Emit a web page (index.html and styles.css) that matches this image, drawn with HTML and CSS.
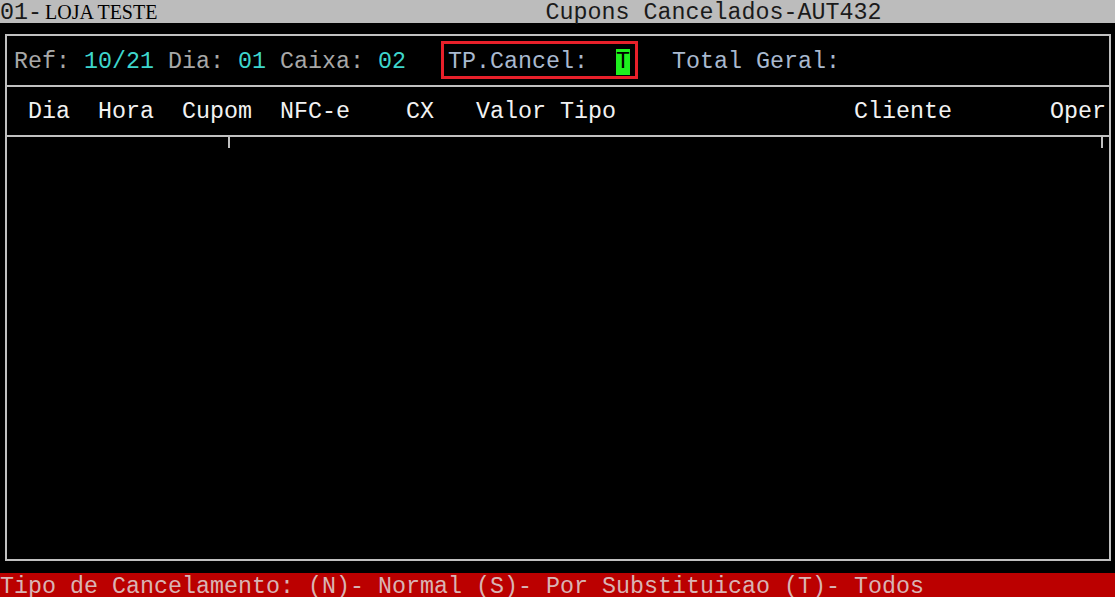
FILE: index.html
```html
<!DOCTYPE html>
<html lang="pt">
<head>
<meta charset="utf-8">
<title>Cupons Cancelados-AUT432</title>
<link rel="stylesheet" href="styles.css">
</head>
<body>
<div class="screen">
  <header class="titlebar"><span class="mono">01-</span><span class="store">LOJA TESTE</span><span class="title mono">Cupons Cancelados-AUT432</span></header>
  <section class="frame">
    <div class="row filters"><span class="lbl">Ref: </span><span class="val">10/21</span><span class="lbl"> Dia: </span><span class="val">01</span><span class="lbl"> Caixa: </span><span class="val">02</span><span class="sp">   </span><span class="hl-box"><span class="lbl2">TP.Cancel:  </span><span class="cursor">T</span></span><span class="sp">   </span><span class="lbl2">Total Geral:</span></div>
    <div class="rule"></div>
    <div class="row head"> Dia  Hora  Cupom  NFC-e    CX   Valor Tipo                 Cliente       Oper</div>
    <div class="rule"></div>
    <div class="ticks"></div>
  </section>
  <footer class="status">Tipo de Cancelamento: (N)- Normal (S)- Por Substituicao (T)- Todos</footer>
</div>
</body>
</html>
```
FILE: styles.css
```css
html, body {
  margin: 0;
  padding: 0;
  background: #000;
}
.screen {
  width: 1115px;
  height: 597px;
  overflow: hidden;
  background: #000;
  font-family: "Liberation Mono", "Courier New", monospace;
  font-size: 23.33px;
  display: flex;
  flex-direction: column;
}
.mono {
  font-family: "Liberation Mono", "Courier New", monospace;
}
.titlebar {
  height: 23px;
  box-sizing: border-box;
  padding-top: 2px;
  line-height: 21px;
  background: #bcbcbc;
  color: #1a1a1a;
  white-space: pre;
  display: flex;
  align-items: baseline;
}
.titlebar .store {
  font-family: "Liberation Serif", "Times New Roman", serif;
  font-size: 20px;
  margin-left: 3px;
  color: #000;
}
.titlebar .title {
  margin-left: 388px;
  color: #1a1a1a;
}
.frame {
  margin-top: 11px;
  margin-left: 5px;
  width: 1106px;
  height: 527px;
  box-sizing: border-box;
  border: 2px solid #c0c0c0;
  display: flex;
  flex-direction: column;
}
.row {
  padding-left: 7px;
  white-space: pre;
  box-sizing: border-box;
}
.filters {
  height: 49px;
  padding-top: 4px;
  line-height: 45px;
}
.head {
  height: 48px;
  padding-top: 2px;
  line-height: 46px;
  color: #f2f2f2;
}
.rule {
  height: 2px;
  background: #c0c0c0;
}
.lbl { color: #a8a8a8; }
.val { color: #3ed6cc; }
.lbl2 { color: #a9b9cf; }
.hl-box {
  position: relative;
}
.hl-box::after {
  content: "";
  position: absolute;
  left: -7px;
  right: -8px;
  top: -8px;
  bottom: -4px;
  border: 3px solid #e8202a;
}
.cursor {
  background: #1ef01e;
  color: #000;
}
.ticks {
  margin-left: 221px;
  width: 871px;
  height: 11px;
  border-left: 2px solid #c0c0c0;
  border-right: 2px solid #c0c0c0;
}
.status {
  margin-top: 12px;
  height: 24px;
  box-sizing: border-box;
  padding-top: 4px;
  line-height: 20px;
  background: #bb0000;
  color: #d9b4b4;
  white-space: pre;
}
```
